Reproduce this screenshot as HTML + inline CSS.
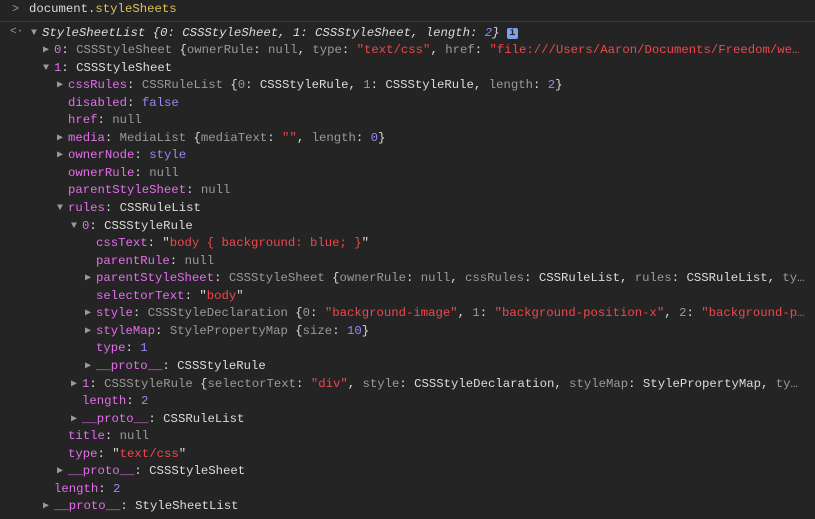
<!DOCTYPE html>
<html><head><meta charset="utf-8"><style>
body{margin:0;background:#242424;width:815px;height:519px;overflow:hidden;font-family:"Liberation Mono",monospace;font-size:12.3px;color:#dcdcdc}
.l{position:absolute;white-space:pre;height:17px;line-height:17px;overflow:hidden;right:2px}
.k{color:#e36eec}.g{color:#9a9a9a}.s{color:#f0474b}.n{color:#9b87f5}.y{color:#e0c15a}
.a{position:absolute;color:#9a9a9a;font-size:10px;line-height:17px}
.sep{position:absolute;left:0;right:0;top:21px;height:1px;background:#3a3a3a}
i{font-style:italic}
.info{display:inline-block;width:11px;height:11px;background:#7e9ff0;border-radius:2px;color:#222;font-size:10px;line-height:11px;text-align:center;vertical-align:1px;font-style:normal;font-weight:bold}
</style></head><body>
<div class="a" style="left:12px;top:1px;font-size:12px">&gt;</div>
<div class="l" style="left:29px;top:1px">document.<span class="y">styleSheets</span></div>
<div class="sep"></div>
<div class="a" style="left:10px;top:24px;font-size:11px">&lt;·</div>
<div id="c"></div>
<script>
var X=[42,54,68,82,96];
var L=[
[0,'d','<i>StyleSheetList {0: CSSStyleSheet, 1: CSSStyleSheet, length: <span class="n">2</span>}</i> <span class="info">i</span>'],
[1,'r','<span class="k">0</span>: <span class="g">CSSStyleSheet</span> {<span class="g">ownerRule</span>: <span class="g">null</span>, <span class="g">type</span>: <span class="s">"text/css"</span>, <span class="g">href</span>: <span class="s">"file:///Users/Aaron/Documents/Freedom/we…</span>'],
[1,'d','<span class="k">1</span>: CSSStyleSheet'],
[2,'r','<span class="k">cssRules</span>: <span class="g">CSSRuleList</span> {<span class="g">0</span>: CSSStyleRule, <span class="g">1</span>: CSSStyleRule, <span class="g">length</span>: <span class="n">2</span>}'],
[2,'','<span class="k">disabled</span>: <span class="n">false</span>'],
[2,'','<span class="k">href</span>: <span class="g">null</span>'],
[2,'r','<span class="k">media</span>: <span class="g">MediaList</span> {<span class="g">mediaText</span>: <span class="s">""</span>, <span class="g">length</span>: <span class="n">0</span>}'],
[2,'r','<span class="k">ownerNode</span>: <span class="n">style</span>'],
[2,'','<span class="k">ownerRule</span>: <span class="g">null</span>'],
[2,'','<span class="k">parentStyleSheet</span>: <span class="g">null</span>'],
[2,'d','<span class="k">rules</span>: CSSRuleList'],
[3,'d','<span class="k">0</span>: CSSStyleRule'],
[4,'','<span class="k">cssText</span>: "<span class="s">body { background: blue; }</span>"'],
[4,'','<span class="k">parentRule</span>: <span class="g">null</span>'],
[4,'r','<span class="k">parentStyleSheet</span>: <span class="g">CSSStyleSheet</span> {<span class="g">ownerRule</span>: <span class="g">null</span>, <span class="g">cssRules</span>: CSSRuleList, <span class="g">rules</span>: CSSRuleList, <span class="g">ty…</span>'],
[4,'','<span class="k">selectorText</span>: "<span class="s">body</span>"'],
[4,'r','<span class="k">style</span>: <span class="g">CSSStyleDeclaration</span> {<span class="g">0</span>: <span class="s">"background-image"</span>, <span class="g">1</span>: <span class="s">"background-position-x"</span>, <span class="g">2</span>: <span class="s">"background-p…</span>'],
[4,'r','<span class="k">styleMap</span>: <span class="g">StylePropertyMap</span> {<span class="g">size</span>: <span class="n">10</span>}'],
[4,'','<span class="k">type</span>: <span class="n">1</span>'],
[4,'r','<span class="k">__proto__</span>: CSSStyleRule'],
[3,'r','<span class="k">1</span>: <span class="g">CSSStyleRule</span> {<span class="g">selectorText</span>: <span class="s">"div"</span>, <span class="g">style</span>: CSSStyleDeclaration, <span class="g">styleMap</span>: StylePropertyMap, <span class="g">ty…</span>'],
[3,'','<span class="k">length</span>: <span class="n">2</span>'],
[3,'r','<span class="k">__proto__</span>: CSSRuleList'],
[2,'','<span class="k">title</span>: <span class="g">null</span>'],
[2,'','<span class="k">type</span>: "<span class="s">text/css</span>"'],
[2,'r','<span class="k">__proto__</span>: CSSStyleSheet'],
[1,'','<span class="k">length</span>: <span class="n">2</span>'],
[1,'r','<span class="k">__proto__</span>: StyleSheetList']
];
var h='';
L.forEach(function(r,i){var t=24.5+i*17.55,x=X[r[0]];
if(r[1])h+='<div class="a" style="left:'+(x-11)+'px;top:'+t+'px">'+(r[1]=='d'?'▼':'▶')+'</div>';
h+='<div class="l" style="left:'+x+'px;top:'+t+'px">'+r[2]+'</div>';});
document.getElementById('c').innerHTML=h;
</script>
</body></html>
